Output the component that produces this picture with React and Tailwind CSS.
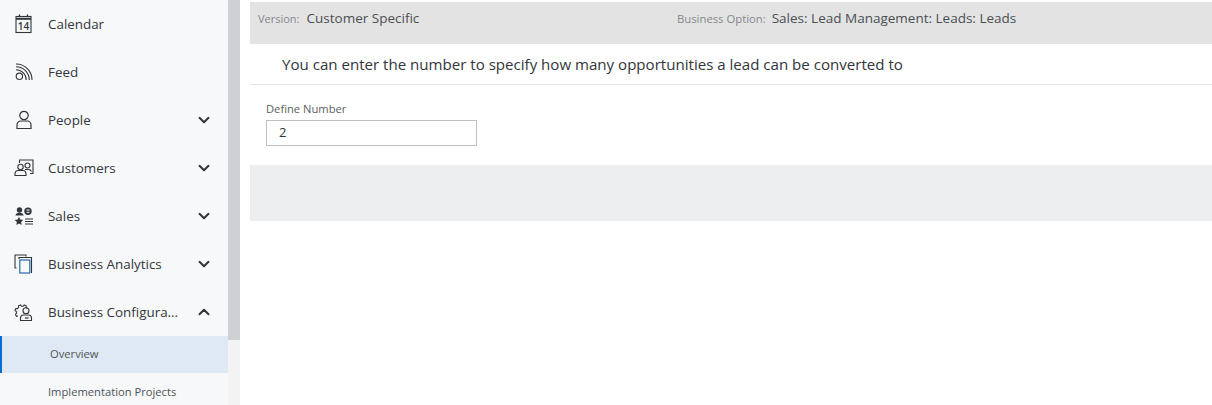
import React from 'react';
import { ChevronDown, ChevronUp } from 'lucide-react';

const CalendarIcon = () => (
  <svg width="18" height="20" viewBox="0 0 18 20" fill="none" stroke="#32363a" strokeWidth="1.100">
    <rect x="1" y="2.500" width="15" height="16" />
    <path d="M1 4.800h15" strokeWidth="2" />
    <path d="M4.500 0.500v2.500M12.500 0.500v2.500" strokeWidth="1.400" />
    <text x="8.500" y="16" textAnchor="middle" fontSize="10" fontWeight="600" fill="#32363a" stroke="none" fontFamily="Open Sans, sans-serif">14</text>
  </svg>
);

const FeedIcon = () => (
  <svg width="18" height="18" viewBox="0 0 18 18" fill="none" stroke="#32363a" strokeWidth="1.100">
    <circle cx="4.400" cy="13.300" r="3.200" />
    <path d="M1 6.800c5.600 0 10.200 4.400 10.200 10.200" />
    <path d="M1 3.800c7.400 0 13.300 5.900 13.300 13.200" />
    <path d="M1 1c9 0 16 7 16 16" />
  </svg>
);

const PersonIcon = () => (
  <svg width="18" height="20" viewBox="0 0 18 20" fill="none" stroke="#32363a" strokeWidth="1.200">
    <circle cx="9" cy="5.500" r="4.200" />
    <path d="M2 18.500v-3.500c0-2.200 1.600-4 3.800-4h6.400c2.200 0 3.800 1.800 3.800 4v3.500z" />
  </svg>
);

const CustomersIcon = () => (
  <svg width="20" height="18" viewBox="0 0 20 18" fill="none" stroke="#32363a" strokeWidth="1.100">
    <path d="M5.500 4V1h13.500v13.500h-3" />
    <circle cx="6.500" cy="8" r="2.700" />
    <circle cx="13.500" cy="6.500" r="2.500" />
    <path d="M1 16.500v-1.500c0-2 1.500-3.500 3.500-3.500h4c2 0 3.500 1.500 3.500 3.500v1.500z" />
    <path d="M11 10.500h3.500c1.500 0 2.500.8 3 2" />
  </svg>
);

const SalesIcon = () => (
  <svg width="20" height="18" viewBox="0 0 20 18" fill="#32363a">
    <circle cx="5.500" cy="3" r="2.700" />
    <path d="M1.500 8.500c0-1.800 1.500-2.800 4-2.800s4 1 4 2.800z" />
    <circle cx="14" cy="4.200" r="3.700" />
    <path d="M12.500 2.500h3.200v1h-3.200zM12.500 4.800h3v1h-3z" fill="#f7f8fa" />
    <path d="M5 9.800l1.300 2.700 3 .4-2.200 2.100.6 3L5 16.500 2.300 18l.6-3L.7 12.900l3-.4z" />
    <path d="M11 11.500h8v1.100h-8zM11 14h8v1.100h-8zM11 16.500h8v1.100h-8z" />
  </svg>
);

const AnalyticsIcon = () => (
  <svg width="19" height="20" viewBox="0 0 19 20" fill="none" stroke="#32363a" strokeWidth="1.100">
    <path d="M2.500 14H1V1h11v1.500" />
    <path d="M5 5V3.500h12.500V19" />
    <rect x="5.800" y="6" width="10" height="13" stroke="#2a6aa8" strokeWidth="1.200" />
  </svg>
);

const ConfigIcon = () => (
  <svg width="19" height="20" viewBox="0 0 19 20" fill="none" stroke="#32363a" strokeWidth="1.100">
    <path d="M4 14l-1.500.3-1-1.800 1-1.300-.2-1.700L1 8.400l.8-1.900 1.600.1 1.200-1.200-.1-1.600 2-.8 1 1.300h1.700l1-1.300 2 .8-.1 1.600 1.200 1.200" />
    <circle cx="12" cy="8.800" r="3" />
    <path d="M6.500 18.500v-2.500c0-1.800 1.300-3 3-3h5c1.700 0 3 1.200 3 3v2.500z" />
    <path d="M11 16h3.500" strokeWidth="1.300" />
  </svg>
);

const navItems = [
  { label: 'Calendar', Icon: CalendarIcon },
  { label: 'Feed', Icon: FeedIcon },
  { label: 'People', Icon: PersonIcon, arrow: 'down' },
  { label: 'Customers', Icon: CustomersIcon, arrow: 'down' },
  { label: 'Sales', Icon: SalesIcon, arrow: 'down' },
  { label: 'Business Analytics', Icon: AnalyticsIcon, arrow: 'down' },
  { label: 'Business Configura...', Icon: ConfigIcon, arrow: 'up' },
];

const NavItem = ({ label, Icon, arrow }) => (
  <div className="flex h-12 shrink-0 items-center text-[13.400px] text-[#32363a]">
    <div className="flex w-12 shrink-0 items-center justify-center pr-[1px]">
      <Icon />
    </div>
    <span className="flex-1 whitespace-nowrap">{label}</span>
    {arrow === 'down' && <ChevronDown size={18} strokeWidth={2.600} className="mr-[15px] text-[#32363a]" />}
    {arrow === 'up' && <ChevronUp size={18} strokeWidth={2.600} className="mr-[15px] text-[#32363a]" />}
  </div>
);

export default function App() {
  return (
    <div className="flex h-[405px] w-[1212px] overflow-hidden bg-white font-['Open_Sans',sans-serif]">
      <aside className="flex h-full w-[228px] shrink-0 flex-col overflow-hidden bg-[#f7f8fa]">
        {navItems.map((item) => (
          <NavItem key={item.label} {...item} />
        ))}
        <div className="flex h-[37px] shrink-0 items-center border-l-2 border-[#0a6ed1] bg-[#dfe9f5] pl-[48px] text-[11.200px] text-[#4f5358]">
          Overview
        </div>
        <div className="flex h-[38px] shrink-0 items-center pl-[48px] text-[11.200px] text-[#4f5358]">
          Implementation Projects
        </div>
      </aside>

      <div className="flex h-full w-3 shrink-0 flex-col bg-[#f3f3f4]">
        <div className="h-[340px] bg-[#cfd0d4]" />
      </div>

      <main className="ml-[10px] flex-1 pt-[2px]">
        <div className="flex h-[42px] bg-[#e3e3e3] pt-[9px] text-[13.500px] leading-[14px] text-[#4b4f54]">
          <div className="flex w-[419px] items-baseline pl-2">
            <span className="mr-[7px] text-[11px] text-[#85888c]">Version:</span>
            <span>Customer Specific</span>
          </div>
          <div className="flex items-baseline pl-2">
            <span className="mr-[6px] text-[11.300px] text-[#85888c]">Business Option:</span>
            <span>Sales: Lead Management: Leads: Leads</span>
          </div>
        </div>

        <div className="flex h-[41px] items-center border-b border-[#e5e5e5] pl-[32px] text-[15.080px] text-[#32363a]">
          You can enter the number to specify how many opportunities a lead can be converted to
        </div>

        <div className="h-[80px] pl-4 pt-[17px]">
          <div className="mb-[4px] text-[11.200px] leading-[14px] text-[#5c5f63]">Define Number</div>
          <div className="flex h-[26px] w-[211px] items-center border border-[#bfbfbf] pl-3 text-[13px] text-[#32363a]">
            2
          </div>
        </div>

        <div className="h-[56px] bg-[#edeef0]" />
      </main>
    </div>
  );
}
